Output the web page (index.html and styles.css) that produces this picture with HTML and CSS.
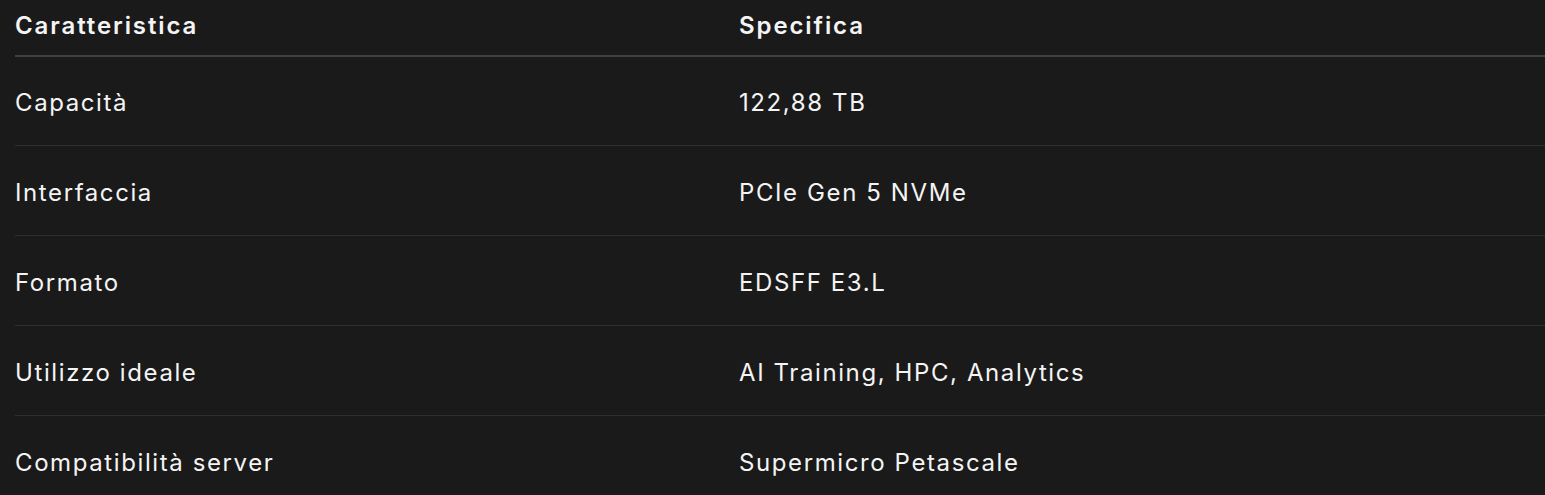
FILE: index.html
```html
<!DOCTYPE html>
<html lang="it">
<head>
<meta charset="utf-8">
<title>Specifiche</title>
<link rel="stylesheet" href="styles.css">
</head>
<body>
<table class="spec-table">
  <thead>
    <tr>
      <th class="col-key">Caratteristica</th>
      <th>Specifica</th>
    </tr>
  </thead>
  <tbody>
    <tr><td>Capacità</td><td>122,88 TB</td></tr>
    <tr><td>Interfaccia</td><td>PCIe Gen 5 NVMe</td></tr>
    <tr><td>Formato</td><td>EDSFF E3.L</td></tr>
    <tr><td>Utilizzo ideale</td><td>AI Training, HPC, Analytics</td></tr>
    <tr><td>Compatibilità server</td><td>Supermicro Petascale</td></tr>
  </tbody>
</table>
</body>
</html>
```
FILE: styles.css
```css
html, body {
  margin: 0;
  padding: 0;
  background: #1a1a1a;
  overflow: hidden;
}
body {
  font-family: Inter, "Noto Sans", "Liberation Sans", sans-serif;
  color: #f4f4f4;
}
.spec-table {
  margin-left: 15px;
  width: 1600px;
  border-collapse: collapse;
  table-layout: fixed;
}
.spec-table th,
.spec-table td {
  text-align: left;
  padding: 0;
  font-size: 24px;
  line-height: 29px;
}
.spec-table th {
  font-weight: 600;
  letter-spacing: 1.9px;
  padding-top: 11px;
  padding-bottom: 15px;
  border-bottom: 2px solid #404040;
}
.spec-table .col-key {
  width: 724px;
}
.spec-table td {
  font-weight: 400;
  letter-spacing: 1.6px;
  height: 90px;
  box-sizing: border-box;
  padding-top: 4px;
  vertical-align: middle;
  border-bottom: 1px solid #2e2e2e;
}
.spec-table tbody tr:first-child td {
  height: 89px;
}
```
